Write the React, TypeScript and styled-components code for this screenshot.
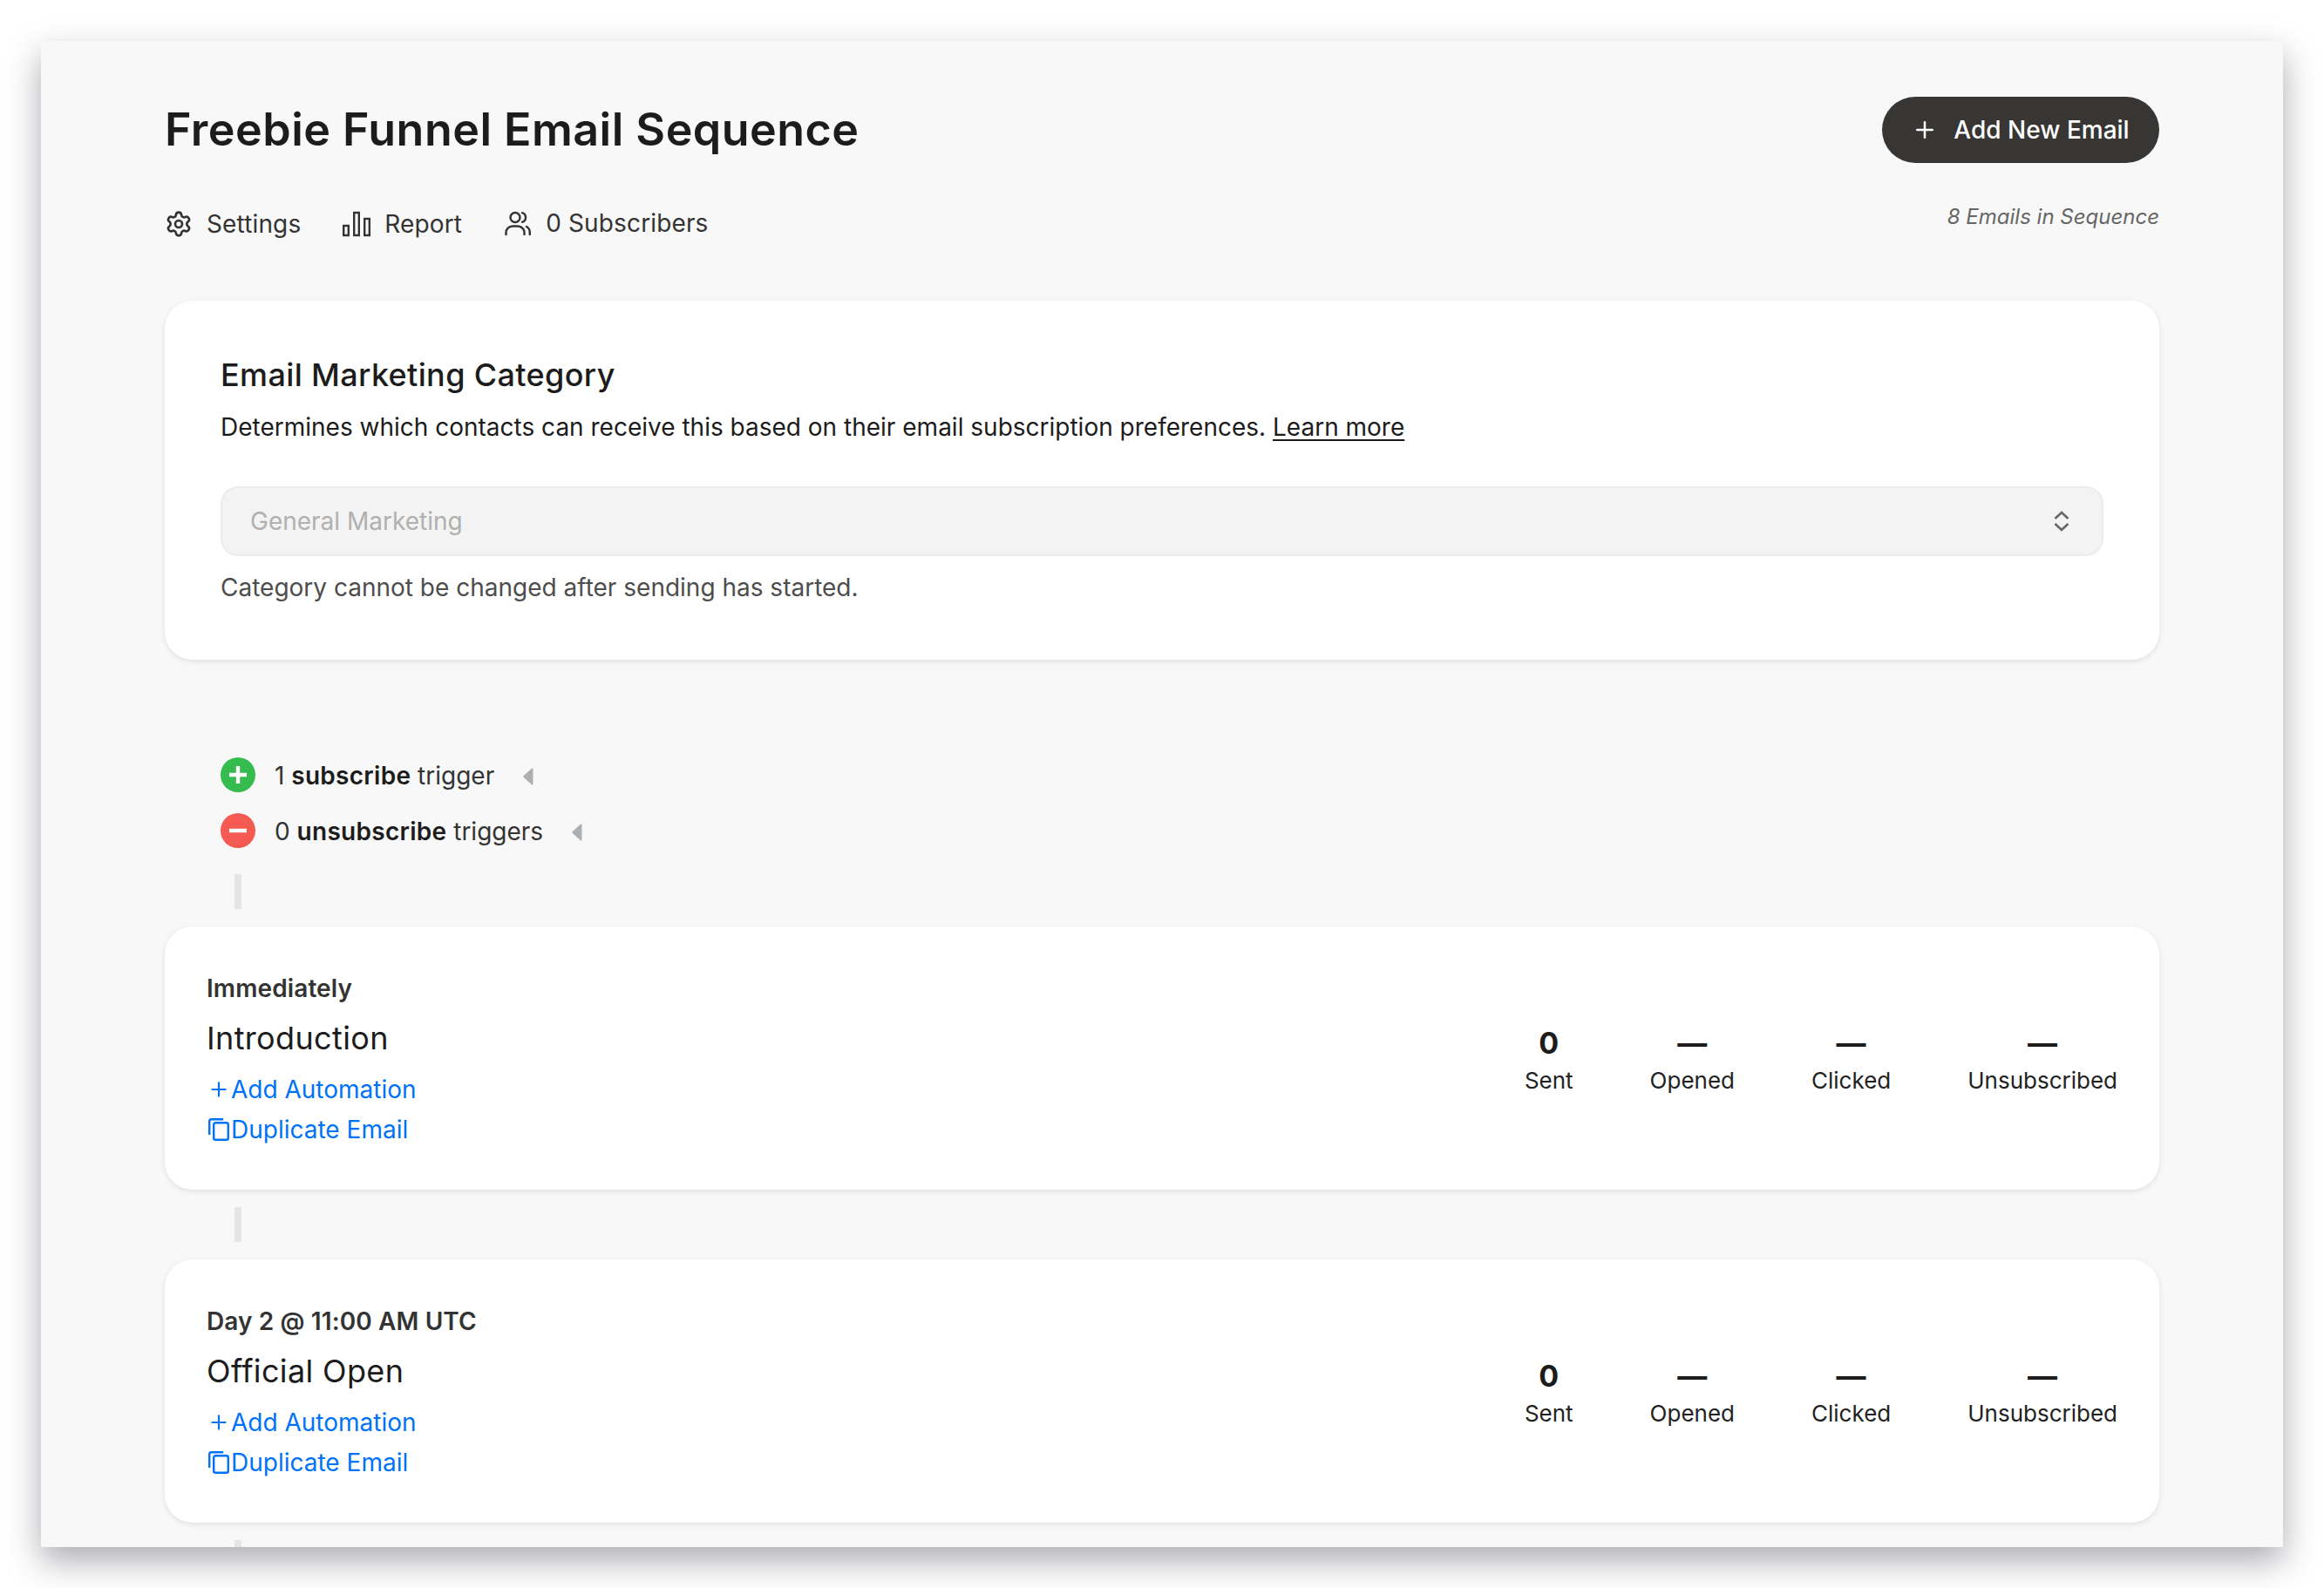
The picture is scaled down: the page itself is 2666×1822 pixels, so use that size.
import React, {FC} from "react";
import styled, {createGlobalStyle} from "styled-components";
import {Plus, Settings} from "lucide-react";

const GlobalStyle = createGlobalStyle`
    html, body {
        margin: 0;
        background: #ffffff;
    }
    body {
        font-family: Inter, "Liberation Sans", sans-serif;
    }
`;

const Page = styled.div`
    width: 2666px;
    height: 1822px;
    padding: 47px;
    box-sizing: border-box;
    overflow: hidden;
`;

const Window = styled.div`
    width: 2572px;
    height: 1728px;
    box-sizing: border-box;
    padding: 64px 142px 0;
    background: #f8f8f8;
    overflow: hidden;
    box-shadow: 0 16px 36px rgba(45, 47, 60, 0.4);
`;

const Header = styled.header`
    display: grid;
    grid-template-columns: 1fr auto;
    height: 234px;
`;

const Title = styled.h1`
    margin: 0;
    font-size: 52px;
    line-height: 76px;
    font-weight: 600;
    letter-spacing: 0.009em;
    color: #1c1c1c;
`;

const AddButton = styled.button`
    display: flex;
    align-items: center;
    justify-content: center;
    gap: 18px;
    width: 318px;
    height: 76px;
    padding: 0;
    border: none;
    border-radius: 38px;
    background: #373634;
    color: #ffffff;
    font: 500 28px Inter, sans-serif;
`;

const MetaRow = styled.nav`
    display: flex;
    align-items: center;
    gap: 48px;
    margin-top: 51px;
    height: 38px;
`;

const MetaItem = styled.a`
    display: flex;
    align-items: center;
    gap: 16px;
    font-size: 28px;
    letter-spacing: 0.005em;
    color: #333333;
`;

const MetaLabel = styled.span<{$raised?: boolean}>`
    margin-bottom: ${props => (props.$raised ? "3px" : "0")};
`;

const SequenceCount = styled.div`
    margin-top: 46px;
    text-align: right;
    font-size: 24px;
    font-style: italic;
    line-height: 32px;
    color: #666666;
`;

const Card = styled.section`
    background: #ffffff;
    border-radius: 32px;
    box-shadow: 0 2px 6px rgba(0, 0, 0, 0.1);
`;

const CategoryCard = styled(Card)`
    height: 412px;
    box-sizing: border-box;
    padding: 58px 64px 0;
`;

const CategoryTitle = styled.h2`
    margin: 0;
    font-size: 36px;
    line-height: 54px;
    font-weight: 500;
    letter-spacing: 0.01em;
    color: #1c1c1c;
`;

const CategoryText = styled.p`
    margin: 14px 0 0;
    font-size: 28px;
    line-height: 38px;
    color: #1c1c1c;

    a {
        text-decoration: underline;
        text-underline-offset: 4px;
    }
`;

const SelectBox = styled.div`
    display: flex;
    align-items: center;
    justify-content: space-between;
    height: 80px;
    box-sizing: border-box;
    margin-top: 49px;
    padding: 0 37px 0 32px;
    background: #f3f3f3;
    border: 2px solid #ececec;
    border-radius: 20px;
    font-size: 28px;
    color: #b0b0b0;
`;

const HelpText = styled.p`
    margin: 17px 0 0;
    font-size: 28px;
    line-height: 38px;
    color: #4d4d4d;
`;

const Triggers = styled.div`
    display: flex;
    flex-direction: column;
    gap: 24px;
    padding: 112px 0 0 64px;
`;

const TriggerRow = styled.div`
    display: flex;
    align-items: center;
    height: 40px;
    font-size: 28px;
    color: #333333;

    b {
        font-weight: 600;
        letter-spacing: 0.01em;
        color: #1c1c1c;
    }
`;

const TriggerBadge = styled.span<{$tone: string}>`
    display: flex;
    align-items: center;
    justify-content: center;
    flex: none;
    width: 40px;
    height: 40px;
    margin-right: 22px;
    border-radius: 50%;
    background: ${props => props.$tone};
`;

const TriggerLabel = styled.span`
    padding-top: 2px;
`;

const Caret = styled.svg`
    flex: none;
    margin: 4px 0 0 33px;
`;

const Connector = styled.div`
    width: 8px;
    height: 40px;
    margin: 20px 0 20px 80px;
    background: #e6e6e6;
`;

const FirstConnector = styled(Connector)`
    margin-top: 30px;
`;

const EmailCard = styled(Card)`
    display: flex;
    align-items: center;
    justify-content: space-between;
    height: 302px;
    box-sizing: border-box;
    padding: 0 48px;
`;

const EmailInfo = styled.div`
    display: flex;
    flex-direction: column;
    padding-top: 7px;
`;

const Timing = styled.div`
    font-size: 28px;
    line-height: 36px;
    font-weight: 600;
    letter-spacing: 0.004em;
    color: #333333;
`;

const EmailName = styled.div`
    margin-top: 11px;
    font-size: 36px;
    line-height: 56px;
    letter-spacing: 0.01em;
    color: #1c1c1c;
`;

const ActionLink = styled.a`
    display: flex;
    align-items: center;
    height: 46px;
    font-size: 28px;
    color: #0072f5;
`;

const FirstAction = styled(ActionLink)`
    margin-top: 8px;
`;

const ActionIcon = styled.span`
    display: flex;
    align-items: center;
    justify-content: center;
    width: 28px;
`;

const Stats = styled.div`
    display: flex;
    gap: 88px;
    padding-top: 8px;
`;

const Stat = styled.div`
    display: flex;
    flex-direction: column;
    align-items: center;
    gap: 7px;
`;

const StatValue = styled.div`
    font-size: 34px;
    line-height: 36px;
    font-weight: 700;
    color: #1c1c1c;
`;

const StatLabel = styled.div`
    font-size: 26px;
    line-height: 36px;
    color: #222222;
`;

const ReportIcon: FC = () => (
    <svg width="32" height="32" viewBox="0 0 32 32" fill="none" stroke="#333" strokeWidth="2.4">
        <rect x="1.2" y="18" width="5.6" height="11" />
        <rect x="13.2" y="3" width="5.6" height="26" />
        <rect x="25.2" y="10" width="5.6" height="19" />
    </svg>
);

const UsersIcon: FC = () => (
    <svg width="32" height="32" viewBox="0 0 32 32" fill="none" stroke="#333" strokeWidth="2.4" strokeLinecap="round">
        <circle cx="13" cy="8.5" r="5.5" />
        <path d="M2.500 28v-2a7.500 7.500 0 0 1 7.500-7.500h6a7.500 7.500 0 0 1 7.500 7.500v2" />
        <path d="M21 3.200a5.500 5.500 0 0 1 0 10.600" />
        <path d="M26 19a7.500 7.500 0 0 1 3.800 6.500V28" />
    </svg>
);

const SelectIcon: FC = () => (
    <svg width="18" height="24" viewBox="0 0 18 24" fill="none" stroke="#666" strokeWidth="2.6">
        <path d="M1.5 9 9 2l7.500 7" />
        <path d="M1.500 15 9 22l7.500-7" />
    </svg>
);

const CopyIcon: FC = () => (
    <svg width="24" height="26" viewBox="0 0 24 26" fill="none" stroke="#0072f5" strokeWidth="2.4">
        <rect x="6.200" y="5.200" width="16.600" height="19.600" rx="2" />
        <path d="M1.200 19V3.200a2 2 0 0 1 2-2h14" />
    </svg>
);

const LeftCaret: FC = () => (
    <Caret width="12" height="20" viewBox="0 0 12 20">
        <path d="M11.500 1.500v17a1 1 0 0 1-1.600.8L.8 11a1.400 1.400 0 0 1 0-2L9.900.7a1 1 0 0 1 1.600.8z" fill="#adb0b3" />
    </Caret>
);

const BadgePlus: FC = () => (
    <svg width="20" height="20" viewBox="0 0 20 20" stroke="#fff" strokeWidth="4.4">
        <path d="M0 10h20M10 0v20" />
    </svg>
);

const BadgeMinus: FC = () => (
    <svg width="20" height="20" viewBox="0 0 20 20" stroke="#fff" strokeWidth="4.4">
        <path d="M0 10h20" />
    </svg>
);

interface EmailProps {
    timing: string;
    name: string;
}

const stats = [
    {label: "Sent", value: "0"},
    {label: "Opened", value: "—"},
    {label: "Clicked", value: "—"},
    {label: "Unsubscribed", value: "—"},
];

const EmailRow: FC<EmailProps> = ({timing, name}) => (
    <EmailCard>
        <EmailInfo>
            <Timing>{timing}</Timing>
            <EmailName>{name}</EmailName>
            <FirstAction>
                <ActionIcon>
                    <Plus size={26} strokeWidth={2} />
                </ActionIcon>
                Add Automation
            </FirstAction>
            <ActionLink>
                <ActionIcon>
                    <CopyIcon />
                </ActionIcon>
                Duplicate Email
            </ActionLink>
        </EmailInfo>
        <Stats>
            {stats.map(stat => (
                <Stat key={stat.label}>
                    <StatValue>{stat.value}</StatValue>
                    <StatLabel>{stat.label}</StatLabel>
                </Stat>
            ))}
        </Stats>
    </EmailCard>
);

export default function App() {
    return (
        <Page>
            <GlobalStyle />
            <Window>
                <Header>
                    <div>
                        <Title>Freebie Funnel Email Sequence</Title>
                        <MetaRow>
                            <MetaItem>
                                <Settings size={32} strokeWidth={2} color="#333" />
                                <MetaLabel>Settings</MetaLabel>
                            </MetaItem>
                            <MetaItem>
                                <ReportIcon />
                                <MetaLabel>Report</MetaLabel>
                            </MetaItem>
                            <MetaItem>
                                <UsersIcon />
                                <MetaLabel $raised>0 Subscribers</MetaLabel>
                            </MetaItem>
                        </MetaRow>
                    </div>
                    <div>
                        <AddButton>
                            <Plus size={30} strokeWidth={2} />
                            Add New Email
                        </AddButton>
                        <SequenceCount>8 Emails in Sequence</SequenceCount>
                    </div>
                </Header>
                <CategoryCard>
                    <CategoryTitle>Email Marketing Category</CategoryTitle>
                    <CategoryText>
                        Determines which contacts can receive this based on their email subscription preferences.{" "}
                        <a>Learn more</a>
                    </CategoryText>
                    <SelectBox>
                        General Marketing
                        <SelectIcon />
                    </SelectBox>
                    <HelpText>Category cannot be changed after sending has started.</HelpText>
                </CategoryCard>
                <Triggers>
                    <TriggerRow>
                        <TriggerBadge $tone="#36bb4f">
                            <BadgePlus />
                        </TriggerBadge>
                        <TriggerLabel>1 <b>subscribe</b> trigger</TriggerLabel>
                        <LeftCaret />
                    </TriggerRow>
                    <TriggerRow>
                        <TriggerBadge $tone="#f55a52">
                            <BadgeMinus />
                        </TriggerBadge>
                        <TriggerLabel>0 <b>unsubscribe</b> triggers</TriggerLabel>
                        <LeftCaret />
                    </TriggerRow>
                </Triggers>
                <FirstConnector />
                <EmailRow timing="Immediately" name="Introduction" />
                <Connector />
                <EmailRow timing="Day 2 @ 11:00 AM UTC" name="Official Open" />
                <Connector />
            </Window>
        </Page>
    );
}
